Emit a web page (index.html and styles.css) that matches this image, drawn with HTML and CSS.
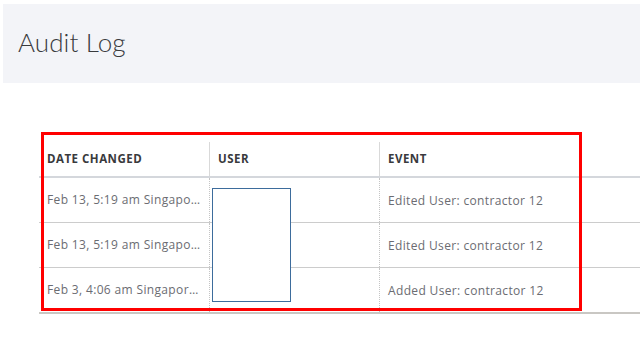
FILE: index.html
```html
<!DOCTYPE html>
<html>
<head>
<meta charset="utf-8">
<link rel="stylesheet" href="styles.css">
</head>
<body>
<header class="page-header">
  <h1 class="title">Audit Log</h1>
</header>
<section class="log">
  <div class="table">
    <div class="row head">
      <div class="cell">DATE CHANGED</div>
      <div class="cell">USER</div>
      <div class="cell">EVENT</div>
    </div>
    <div class="row">
      <div class="cell">Feb 13, 5:19 am Singapore Standard Time</div>
      <div class="cell"></div>
      <div class="cell">Edited User: contractor 12</div>
    </div>
    <div class="row">
      <div class="cell">Feb 13, 5:19 am Singapore Standard Time</div>
      <div class="cell"></div>
      <div class="cell">Edited User: contractor 12</div>
    </div>
    <div class="row last">
      <div class="cell">Feb 3, 4:06 am Singapore Standard Time</div>
      <div class="cell"></div>
      <div class="cell">Added User: contractor 12</div>
    </div>
  </div>
  <div class="redact"></div>
  <div class="highlight"></div>
</section>
</body>
</html>
```
FILE: styles.css
```css
* { box-sizing: border-box; }
html, body { margin: 0; padding: 0; background: #fff; }
body { width: 640px; height: 337px; overflow: hidden; font-family: "Open Sans", sans-serif; }

.page-header {
  margin: 4px 0 0 3px;
  height: 79px;
  background: #f3f4f8;
  display: flex;
  align-items: center;
  padding-left: 15px;
}
.title {
  margin: 0;
  font-family: "Lato", sans-serif;
  font-weight: 300;
  font-size: 26px;
  color: #393a3d;
  letter-spacing: 0.1px;
  padding-bottom: 3px;
}

.log {
  position: relative;
  margin: 59px 0 0 39px;
}
.table {
  border-bottom: 2px solid #c9c7c3;
}
.row {
  display: grid;
  grid-template-columns: 170px 170px 1fr;
  height: 45px;
  border-bottom: 1px solid #cccccc;
}
.row.last { border-bottom: none; height: 44px; }
.row.head {
  height: 36px;
  border-bottom: 2px solid #d4d7dc;
}
.cell {
  display: flex;
  align-items: center;
  padding: 0 8px;
  font-size: 12px;
  letter-spacing: 0.35px;
  color: #6b6c72;
  white-space: nowrap;
  overflow: hidden;
  min-width: 0;
}
.cell + .cell { border-left: 1px dotted #c4c4c4; }
.row .cell:first-child {
  display: block;
  line-height: 44px;
  text-overflow: ellipsis;
}
.row.last .cell:first-child { line-height: 44px; }
.head .cell {
  font-family: "Open Sans", sans-serif;
  font-weight: 700;
  font-size: 11.5px;
  letter-spacing: 0.5px;
  color: #393a3d;
  padding-top: 0;
}
.head .cell:first-child { line-height: 33px; }
.head .cell + .cell { border-left: 1px solid #d9d9d9; padding-bottom: 1px; }

.redact {
  position: absolute;
  left: 173px;
  top: 46px;
  width: 79px;
  height: 114px;
  background: #fff;
  border: 1px solid #3d6c9c;
}
.highlight {
  position: absolute;
  left: 2px;
  top: -10px;
  width: 541px;
  height: 179px;
  border: 3px solid #ff0000;
  pointer-events: none;
}
```
